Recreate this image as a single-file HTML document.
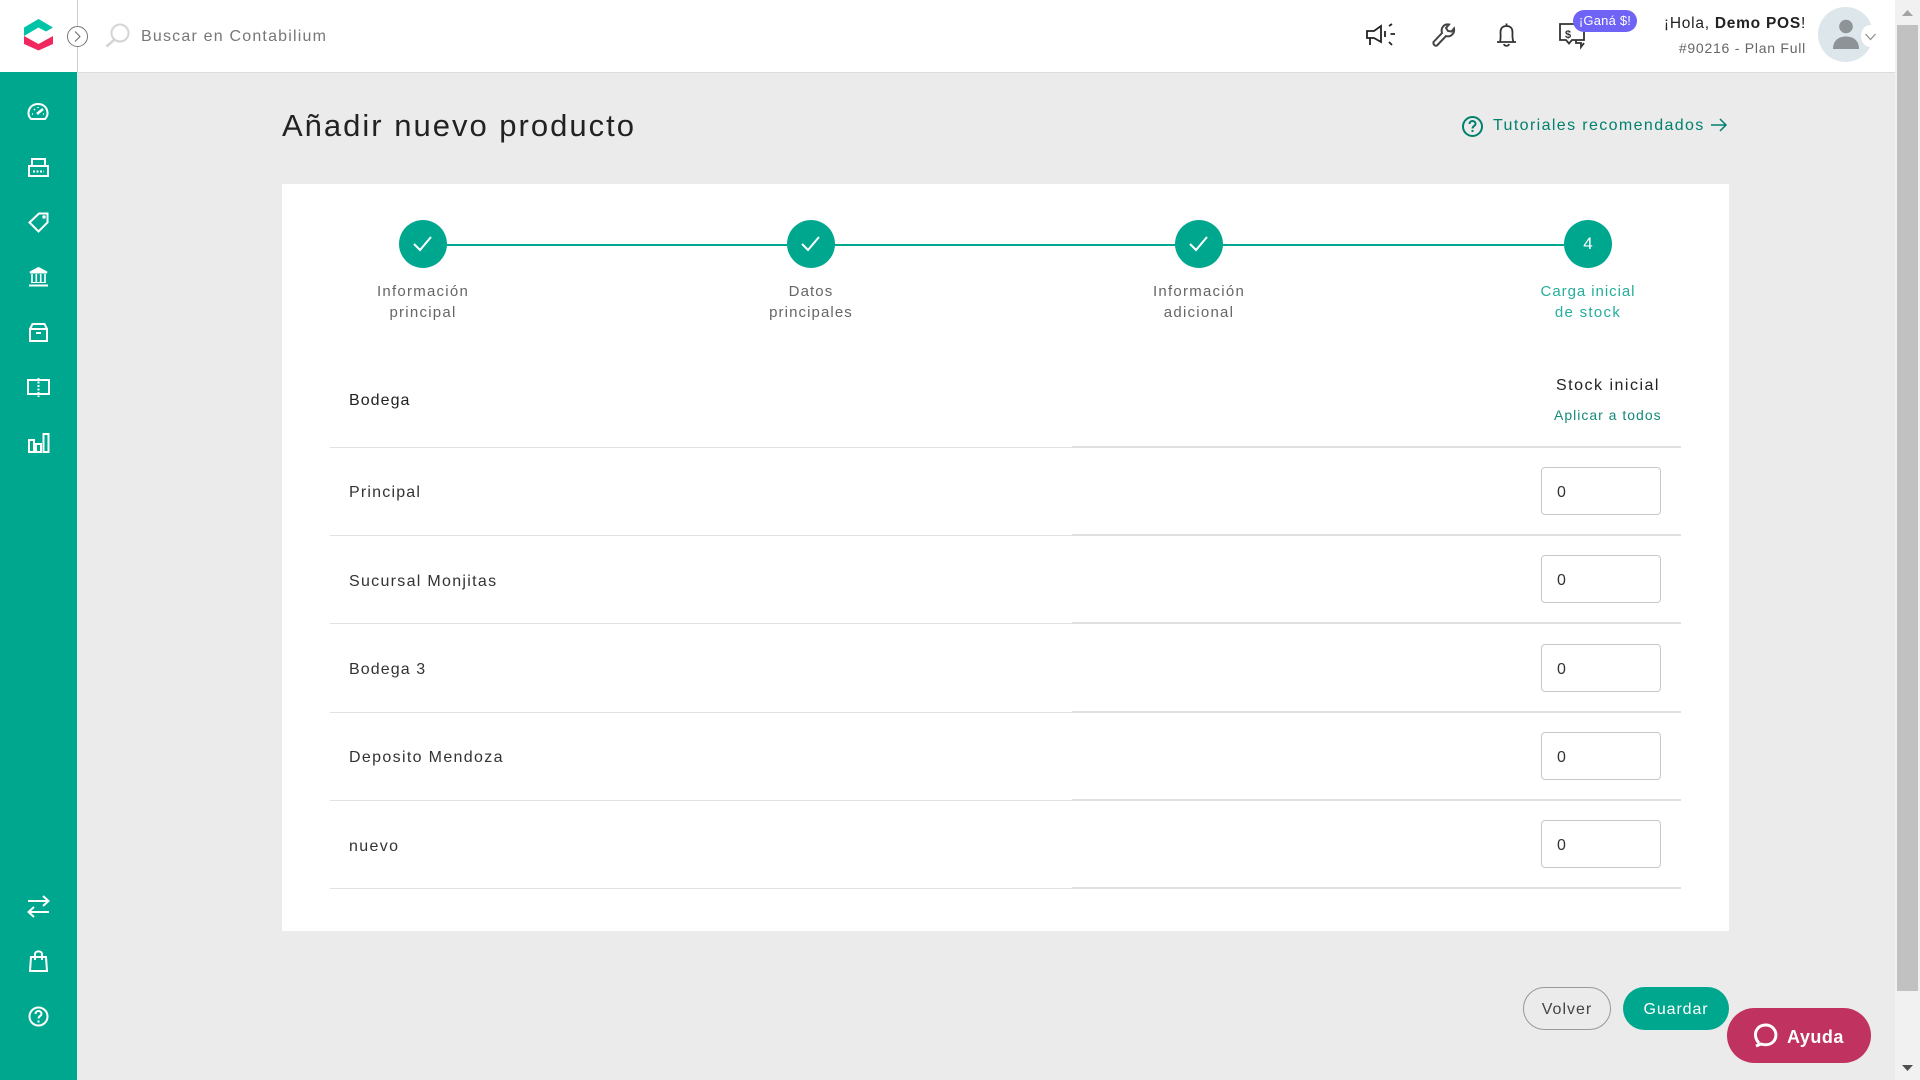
<!DOCTYPE html>
<html lang="es"><head><meta charset="utf-8"><title>Añadir nuevo producto</title>
<style>
html,body{margin:0;padding:0;width:1920px;height:1080px;overflow:hidden;background:#ebebeb;font-family:"Liberation Sans",sans-serif;color:#212529}
.a{position:absolute;white-space:nowrap}
svg{position:absolute;overflow:visible}
.c{text-align:center}
.r{text-align:right}
.hdr{left:0;top:0;width:1895px;height:72px;background:#fff;border-bottom:1px solid #dcdcdc}
.side{left:0;top:72px;width:77px;height:1008px;background:#00a78f}
.card{left:282px;top:184px;width:1447px;height:747px;background:#fff}
.line{left:330px;width:1351px;height:1px;background:#e2e2e2}
.line2{left:1072px;width:609px;height:2px;background:#e0e0e0}
.inp{left:1541px;width:118px;height:46px;border:1px solid #c8c8c8;border-radius:4px;background:#fff;font-size:16px;line-height:49px;text-indent:15px;color:#333;letter-spacing:.6px}
.step{width:48px;height:48px;border-radius:50%;background:#00a78f;top:220px;color:#fff;text-align:center;line-height:47px;font-size:17px}
.lbl{top:281px;width:200px;font-size:15px;line-height:21px;color:#666;text-align:center;letter-spacing:1.25px}
.row{left:349px;font-size:16px;line-height:20px;color:#333}
</style></head><body>
<div class="a" style="left:800px;top:-6px;width:320px;height:6px;box-shadow:0 0 8px rgba(0,0,0,.12)"></div>
<div class="a hdr"></div>
<div class="a" style="left:77px;top:0;width:1px;height:72px;background:#cfcfcf"></div>
<div class="a side"></div>

<svg style="left:24px;top:19px" width="30" height="32" viewBox="0 0 30 32"><path d="M14.5 0L29 8.5L22 12.5L14.500 8.500L0 17V8.500Z" fill="#00c4a7"/><path d="M0 17L14.500 25L29 17V25L14.500 31.500L0 25Z" fill="#f0285f"/></svg>
<div class="a" style="left:67px;top:26px;width:19px;height:19px;border:1px solid #777;border-radius:50%;background:#fff"></div>
<svg style="left:67px;top:26px" width="21" height="21" fill="none" stroke="#666" stroke-width="1"><path d="M8 5.500L13 10.500L8 15.500"/></svg>
<svg style="left:105px;top:23px" width="25" height="25" fill="none" stroke="#d4d4d4"><circle cx="15" cy="10" r="8.500" stroke-width="2"/><path d="M9 17L1.500 23.500" stroke-width="2.500"/></svg>
<div class="a" style="left:141px;top:27px;font-size:16px;line-height:20px;color:#777;letter-spacing:1.2px">Buscar en Contabilium</div>

<svg style="left:1365px;top:23px" width="32" height="24" fill="none" stroke="#222" stroke-width="1.800"><path d="M2 8H9L16 3V19L9 15H2Z"/><path d="M5 15V22M20 8V14M25.500 11H30M24 3L27 1M24 19L27 22"/></svg>
<svg style="left:1432px;top:23px" width="23" height="24" fill="none" stroke="#444" stroke-width="2"><path d="M1.500 19L10 10C8.500 5 12 0.500 17 1.500L14 5L16 8L19.500 8.500L22 5.500C23 11 18 14.500 14 13L5 22.500C3 23.500 1 21.500 1.500 19Z"/></svg>
<svg style="left:1496px;top:23px" width="21" height="24" fill="none" stroke="#333" stroke-width="1.800"><path d="M1 19H20M4 19C5 15 4.500 12 4.500 9C4.500 5 7 3 10.500 3C14 3 16.500 5 16.500 9C16.500 12 16 15 17.500 19"/><path d="M8 21C8.500 23.500 12.500 23.500 13 21M10.500 .5V3"/></svg>
<svg style="left:1559px;top:23px" width="27" height="25" fill="none" stroke="#333" stroke-width="1.800"><path d="M20 1H1V17H7L10 20.500L13 17H25V9"/><path d="M17 17V20H22V24L25 20"/></svg>
<div class="a" style="left:1565px;top:29px;font-size:11px;line-height:13px;font-weight:bold;color:#333">$</div>
<div class="a c" style="left:1573px;top:10px;width:64px;height:22px;border-radius:11px;background:#6f63f6;color:#fff;font-size:13px;line-height:22px;letter-spacing:.2px">¡Ganá $!</div>
<div class="a r" style="right:114px;top:15px;font-size:15.500px;line-height:18px;color:#222;letter-spacing:.75px">¡Hola, <b>Demo POS</b>!</div>
<div class="a r" style="right:114px;top:40px;font-size:14px;line-height:17px;color:#666;letter-spacing:.75px">#90216 - Plan Full</div>
<div class="a" style="left:1818px;top:7px;width:55px;height:55px;border-radius:50%;background:#dde6ea"></div>
<svg style="left:1833px;top:20px" width="26" height="30" fill="#8d9396"><circle cx="13" cy="6.500" r="6.800"/><path d="M0 29C0 21 5 16.500 13 16.500C21 16.500 26 21 26 29Z"/></svg>
<div class="a" style="left:1861px;top:25px;width:18px;height:22px;border-radius:50%;background:#fff"></div>
<svg style="left:1864px;top:32px" width="13" height="10" fill="none" stroke="#888" stroke-width="1.100"><path d="M1.500 2L6.500 7.500L11.500 2"/></svg>

<svg style="left:28px;top:103px" width="20" height="17" fill="none" stroke="#fff" stroke-width="2"><path d="M3 16C0 13 0 10 1 7C2.500 3 6 1 10 1C14 1 17.500 3 19 7C20 10 20 13 17 16Z"/><path d="M9 11L15 6" stroke-width="2.500"/><path d="M4 11H5M6 6L7 7M10 4V5M15 11H16" stroke-width="1.500"/></svg>
<svg style="left:28px;top:158px" width="21" height="19" fill="none" stroke="#fff" stroke-width="2"><path d="M4 8V1H17V8"/><path d="M1 8H20V18H1Z"/><path d="M5 13.500H16" stroke-dasharray="2 1.500"/></svg>
<svg style="left:28px;top:212px" width="21" height="21" fill="none" stroke="#fff" stroke-width="2"><path d="M1.500 10.500L11 1.500H19.500V10.500L10.500 19.500Z"/><circle cx="16" cy="5" r=".7"/></svg>
<svg style="left:28px;top:267px" width="21" height="20" fill="none" stroke="#fff" stroke-width="2"><path d="M10.500 1L19 5.500H2Z" fill="#fff"/><path d="M4 7V15M8.300 7V15M12.700 7V15M17 7V15" stroke-width="1.600"/><path d="M3 15.500H18" stroke-width="1"/><path d="M1 18.500H20"/></svg>
<svg style="left:29px;top:323px" width="19" height="19" fill="none" stroke="#fff" stroke-width="2"><path d="M1 6H18V18H1ZM1 6L3.500 1H15.500L18 6M7 10H12"/></svg>
<svg style="left:27px;top:378px" width="23" height="19" fill="none" stroke="#fff" stroke-width="2"><path d="M1 2H22V16H1Z"/><path d="M11.500 0V19" stroke-dasharray="2 1.500"/></svg>
<svg style="left:27px;top:433px" width="23" height="20" fill="none" stroke="#fff" stroke-width="2"><path d="M2 7H7V19H2ZM9 11H14V19H9ZM16.500 1H21.500V19H16.500Z"/></svg>
<svg style="left:27px;top:895px" width="23" height="23" fill="none" stroke="#fff" stroke-width="2"><path d="M1 6H21M16 1L21.500 6L16 11M22 17H2M7 12L1.500 17L7 22"/></svg>
<svg style="left:29px;top:950px" width="19" height="22" fill="none" stroke="#fff" stroke-width="2"><path d="M2 7H17L18 21H1Z"/><path d="M6 10V4C6 0.500 13 0.500 13 4V10"/></svg>
<svg style="left:28px;top:1006px" width="21" height="21" fill="none" stroke="#fff" stroke-width="2"><circle cx="10.500" cy="10.500" r="9"/><path d="M7.500 8C7.500 4 13.500 4 13.500 8C13.500 10 10.500 10 10.500 12.500"/><path d="M10.500 14.500V16.500"/></svg>

<div class="a" style="left:282px;top:107px;font-size:31px;line-height:38px;color:#222;letter-spacing:2px">Añadir nuevo producto</div>
<svg style="left:1461px;top:115px" width="23" height="23" fill="none" stroke="#00806e" stroke-width="2"><circle cx="11.500" cy="11.500" r="9.500"/><path d="M8.500 9C8.500 5 14.500 5 14.500 9C14.500 11 11.500 11 11.500 13.500M11.500 15V17"/></svg>
<div class="a" style="left:1493px;top:116px;font-size:16px;line-height:20px;color:#00806e;letter-spacing:1.38px">Tutoriales recomendados</div>
<svg style="left:1710px;top:118px" width="18" height="15" fill="none" stroke="#00806e" stroke-width="1.500"><path d="M1 7H16M10 1L16 7L10 13"/></svg>

<div class="a card"></div>
<div class="a" style="left:447px;top:244px;width:1117px;height:2px;background:#00a78f"></div>
<div class="a step" style="left:399px"></div><div class="a step" style="left:787px"></div><div class="a step" style="left:1175px"></div><div class="a step" style="left:1564px">4</div>
<svg style="left:399px;top:220px" width="48" height="48" fill="none" stroke="#fff" stroke-width="2"><path d="M15 24L21 30L32 17"/></svg>
<svg style="left:787px;top:220px" width="48" height="48" fill="none" stroke="#fff" stroke-width="2"><path d="M15 24L21 30L32 17"/></svg>
<svg style="left:1175px;top:220px" width="48" height="48" fill="none" stroke="#fff" stroke-width="2"><path d="M15 24L21 30L32 17"/></svg>
<div class="a lbl" style="left:323px">Información<br>principal</div>
<div class="a lbl" style="left:711px;letter-spacing:1.1px">Datos<br>principales</div>
<div class="a lbl" style="left:1099px">Información<br>adicional</div>
<div class="a lbl" style="left:1488px;color:#25ae9a;letter-spacing:.95px">Carga inicial<br><span style="letter-spacing:1.3px">de stock</span></div>

<div class="a row" style="top:391px;color:#222;letter-spacing:1.05px">Bodega</div>
<div class="a" style="left:1556px;top:376px;font-size:16px;line-height:20px;color:#222;letter-spacing:1.5px">Stock inicial</div>
<div class="a" style="left:1554px;top:406px;font-size:14px;line-height:18px;color:#14897a;letter-spacing:1px">Aplicar a todos</div>
<div class="a line" style="top:447px"></div><div class="a line2" style="top:446px"></div>
<div class="a row" style="top:483px;letter-spacing:1.2px">Principal</div><div class="a inp" style="top:467px">0</div>
<div class="a line" style="top:535px"></div><div class="a line2" style="top:534px"></div>
<div class="a row" style="top:572px;letter-spacing:1.3px">Sucursal Monjitas</div><div class="a inp" style="top:555px">0</div>
<div class="a line" style="top:623px"></div><div class="a line2" style="top:622px"></div>
<div class="a row" style="top:660px;letter-spacing:1.1px">Bodega 3</div><div class="a inp" style="top:644px">0</div>
<div class="a line" style="top:712px"></div><div class="a line2" style="top:711px"></div>
<div class="a row" style="top:748px;letter-spacing:1.34px">Deposito Mendoza</div><div class="a inp" style="top:732px">0</div>
<div class="a line" style="top:800px"></div><div class="a line2" style="top:799px"></div>
<div class="a row" style="top:837px;letter-spacing:1.35px">nuevo</div><div class="a inp" style="top:820px">0</div>
<div class="a line" style="top:888px"></div><div class="a line2" style="top:887px"></div>

<div class="a c" style="left:1523px;top:987px;width:86px;height:41px;border:1px solid #999;border-radius:22px;font-size:16px;line-height:43px;color:#444;letter-spacing:1px">Volver</div>
<div class="a c" style="left:1623px;top:987px;width:106px;height:43px;border-radius:22px;background:#00a78f;color:#fff;font-size:16px;line-height:45px;letter-spacing:.9px">Guardar</div>
<div class="a" style="left:1727px;top:1008px;width:144px;height:55px;border-radius:28px;background:#c0325f"></div>
<svg style="left:1754px;top:1023px" width="24" height="25" fill="none" stroke="#fff" stroke-width="3"><path d="M5 20C1 16 0.500 10 3 6.500C6 1.500 14 0.500 18.500 4.500C23 8.500 23 15 19 19C15.500 22.500 10 22 7 21L2 23"/></svg>
<div class="a" style="left:1787px;top:1026px;font-size:18px;line-height:22px;font-weight:bold;color:#fff;letter-spacing:.5px">Ayuda</div>

<div class="a" style="left:1895px;top:0;width:25px;height:1080px;background:#f1f1f1"></div>
<div class="a" style="left:1897px;top:25px;width:21px;height:966px;background:#c1c1c1"></div>
<svg style="left:1895px;top:0" width="25" height="1080" fill="#505050"><path d="M7 16L12.500 10L18 16Z" fill="#a3a3a3"/><path d="M7 1065H18L12.500 1071Z"/></svg>
</body></html>
